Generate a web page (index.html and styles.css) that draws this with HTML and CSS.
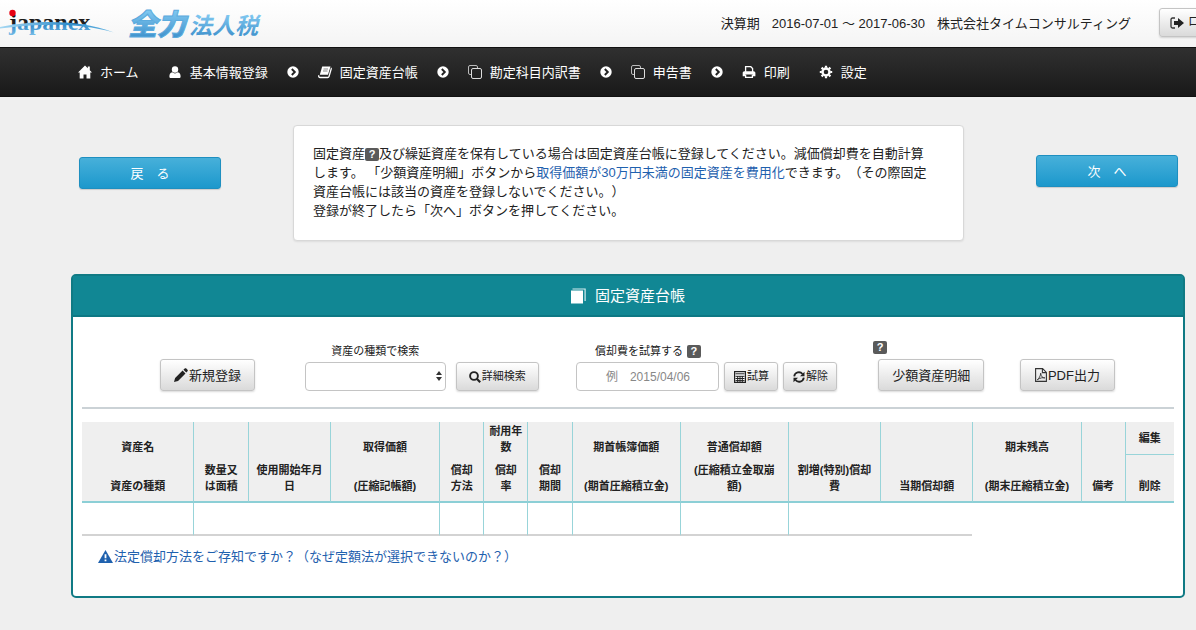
FILE: index.html
```html
<!DOCTYPE html>
<html lang="ja">
<head>
<meta charset="utf-8">
<meta name="viewport" content="width=device-width, initial-scale=1">
<title>固定資産台帳 - 全力法人税</title>
<link rel="stylesheet" href="styles.css">
</head>
<body>
<svg class="defs" aria-hidden="true">
  <symbol id="i-next" viewBox="0 0 12 12"><circle cx="6" cy="6" r="5.7" fill="#fff"/><path d="M4.8 3l3 3-3 3" fill="none" stroke="#222" stroke-width="1.9"/></symbol>
  <symbol id="i-copy" viewBox="0 0 14 14"><path d="M3.5 9.5H2A1.5 1.5 0 0 1 .5 8V2A1.5 1.5 0 0 1 2 .5h6A1.5 1.5 0 0 1 9.500 2v1.500" fill="none" stroke="#bbb"/><rect x="3.500" y="3.500" width="10" height="10" rx="1.500" fill="none" stroke="#ddd"/></symbol>
</svg>

<header class="top">
  <a class="brand" href="#" aria-label="全力法人税">
    <svg width="262" height="47" viewBox="0 0 262 47">
      <defs>
        <linearGradient id="ink" gradientUnits="userSpaceOnUse" x1="0" y1="14" x2="0" y2="36">
          <stop offset="0" stop-color="#111"/><stop offset=".45" stop-color="#222"/><stop offset=".47" stop-color="#2f86c4"/><stop offset="1" stop-color="#7cc0ea"/>
        </linearGradient>
        <linearGradient id="sky" x1="0" y1="0" x2="0" y2="1">
          <stop offset=".2" stop-color="#83caf2"/><stop offset=".9" stop-color="#3d90cb"/>
        </linearGradient>
        <linearGradient id="arc" x1="0" y1="0" x2="1" y2="0">
          <stop offset="0" stop-color="#a5d8f3"/><stop offset=".6" stop-color="#2e8ccb"/><stop offset="1" stop-color="#6db9e4"/>
        </linearGradient>
      </defs>
      <text x="9" y="30" class="logo-en" fill="url(#ink)">japanex</text>
      <path d="M0 27C30 21 75 18 114 32.500C78 22.500 40 23.500 0 28.500Z" fill="url(#arc)"/>
      <circle cx="12.500" cy="13" r="3.200" fill="#e60012"/>
      <text x="128" y="35" class="logo-lead" fill="url(#sky)" stroke="#5cabdd">全力</text>
      <text x="189" y="34" class="logo-sub" fill="url(#sky)">法人税</text>
    </svg>
  </a>
  <p class="period"><span>決算期</span><span>2016-07-01 ～ 2017-06-30</span><span>株式会社タイムコンサルティング</span></p>
  <button type="button" class="btn btn-logout">
    <svg width="14" height="12" viewBox="0 0 14 12"><path d="M5 1H2.500A1.500 1.500 0 0 0 1 2.500v7A1.500 1.500 0 0 0 2.500 11H5" fill="none" stroke="#333" stroke-width="1.300"/><path d="M4 4h4V1l6 5-6 5V8H4z" fill="#222"/></svg>
    ログアウト
  </button>
</header>

<nav class="nav">
  <a class="nav-item wide" href="#">
    <svg width="14" height="14" viewBox="0 0 14 14"><path d="M7 .5L9.800 3.200V1.500h2v3.700L14 7.400h-1.700V13.500H8.500V9.500h-3v4H1.700V7.400H0z" fill="#fff"/></svg>ホーム</a>
  <a class="nav-item" href="#">
    <svg width="14" height="14" viewBox="0 0 14 14"><circle cx="7" cy="4.500" r="3.200" fill="#fff"/><path d="M4.300 7.300c1.500 1.500 3.900 1.500 5.400 0C12 7.500 12.600 9.500 12.600 11.500c0 1-.6 1.500-1.500 1.500H2.900c-.9 0-1.500-.5-1.500-1.500 0-2 .6-4 2.900-4.200z" fill="#fff"/></svg>基本情報登録</a>
  <svg class="next" width="12" height="12"><use href="#i-next"/></svg>
  <a class="nav-item" href="#">
    <svg width="14" height="14" viewBox="0 0 14 14"><path d="M4.200 1.500h8.300L10 9.800H1.800z" fill="#fff"/><path d="M13 3c.3.400.3.700.1 1.200L11 11.500c-.2.700-.6 1-1.300 1H2.200c-1.200 0-1.800-1-1.300-2.200" fill="none" stroke="#fff" stroke-width="1.300"/><path d="M5.500 4h4.500M5 6h4.500" stroke="#555" stroke-width=".7"/></svg>固定資産台帳</a>
  <svg class="next" width="12" height="12"><use href="#i-next"/></svg>
  <a class="nav-item" href="#"><svg width="14" height="14"><use href="#i-copy"/></svg>勘定科目内訳書</a>
  <svg class="next" width="12" height="12"><use href="#i-next"/></svg>
  <a class="nav-item" href="#"><svg width="14" height="14"><use href="#i-copy"/></svg>申告書</a>
  <svg class="next" width="12" height="12"><use href="#i-next"/></svg>
  <a class="nav-item wide" href="#">
    <svg width="14" height="14" viewBox="0 0 14 14"><path d="M3.600 7V1.700h5.200l1.800 1.800V7" fill="none" stroke="#fff" stroke-width="1.300"/><path d="M2.500 6.200h9C12.600 6.200 13.400 7 13.400 8v3.300H11V9.500H3v1.800H.7V8c0-1 .7-1.800 1.800-1.800z" fill="#fff"/><path d="M3.600 9.500v2.800h6.800V9.500" fill="none" stroke="#fff" stroke-width="1.300"/></svg>印刷</a>
  <a class="nav-item" href="#">
    <svg width="14" height="14" viewBox="0 0 14 14"><circle cx="7" cy="7" r="3.500" fill="none" stroke="#fff" stroke-width="2.400"/><path d="M7 .8v2M7 11.200v2M.8 7h2M11.200 7h2M2.600 2.600L4 4M10 10l1.400 1.400M2.600 11.400L4 10M10 4l1.400-1.400" stroke="#fff" stroke-width="2.200"/></svg>設定</a>
</nav>

<main>
  <section class="guide">
    <button type="button" class="btn-primary back">戻　る</button>
    <div class="guide-box">
      <p>固定資産<button type="button" class="help inline" aria-label="ヘルプ">?</button>及び繰延資産を保有している場合は固定資産台帳に登録してください。減価償却費を自動計算します。 「少額資産明細」ボタンから<a href="#">取得価額が30万円未満の固定資産を費用化</a>できます。（その際固定資産台帳には該当の資産を登録しないでください。）</p>
      <p>登録が終了したら「次へ」ボタンを押してください。</p>
    </div>
    <button type="button" class="btn-primary forward">次　へ</button>
  </section>

  <section class="panel">
    <h1 class="panel-title">
      <svg width="15" height="16" viewBox="0 0 15 16"><rect x="0" y="2.500" width="12" height="13" fill="#fff"/><path d="M1.500 1h12.600v12" fill="none" stroke="#d5eef0" stroke-width="1.200"/></svg>
      固定資産台帳</h1>
    <div class="panel-body">
      <div class="toolbar">
        <button type="button" class="btn btn-large btn-new">
          <svg width="14" height="14" viewBox="0 0 14 14"><path d="M0 14l1.100-4L8.600 2.500l2.900 2.900L4 12.900zM9.400 1.700L10.700.5c.5-.5 1.100-.5 1.600 0l1.200 1.200c.5.500.5 1.100 0 1.600l-1.200 1.300z" fill="#222"/></svg>新規登録</button>

        <div class="group">
          <div class="field">
            <label for="kind">資産の種類で検索</label>
            <div class="select">
              <select id="kind"><option></option></select>
              <svg width="6" height="10" viewBox="0 0 6 10"><path d="M3 0l3 4H0zM3 10l3-4H0z" fill="#333"/></svg>
            </div>
          </div>
          <button type="button" class="btn btn-search">
            <svg width="12" height="12" viewBox="0 0 12 12"><circle cx="5" cy="5" r="3.900" fill="none" stroke="#222" stroke-width="1.900"/><path d="M7.800 7.800l3.400 3.400" stroke="#222" stroke-width="2.200"/></svg>詳細検索</button>
        </div>

        <div class="group tight">
          <div class="field">
            <div class="caption"><label for="trial">償却費を試算する</label><button type="button" class="help" aria-label="ヘルプ">?</button></div>
            <input id="trial" type="text" placeholder="例　2015/04/06">
          </div>
          <button type="button" class="btn btn-small">
            <svg width="12" height="12" viewBox="0 0 12 12"><path d="M.6.600h10.800v10.800H.6z" fill="#fff" stroke="#222" stroke-width="1.200"/><path d="M1.500 2.800h9M1.500 5.300h9M1.500 7.500h9M1.500 9.600h9M3.700 5v6M6 5v6M8.300 5v6" stroke="#222"/></svg>試算</button>
          <button type="button" class="btn btn-small">
            <svg width="12" height="12" viewBox="0 0 12 12"><path d="M1.200 5.300A4.700 4.700 0 0 1 9.500 3M10.800 6.700A4.700 4.700 0 0 1 2.500 9" fill="none" stroke="#222" stroke-width="1.800"/><path d="M11.500.8v4.500H7zM.5 11.200V6.700H5z" fill="#222"/></svg>解除</button>
        </div>

        <div class="small-asset">
          <button type="button" class="help" aria-label="ヘルプ">?</button>
          <button type="button" class="btn btn-large">少額資産明細</button>
        </div>

        <button type="button" class="btn btn-large btn-pdf">
          <svg width="12" height="14" viewBox="0 0 12 14"><path d="M.6.600h7l3.800 3.800v9H.6zM7.400.600v4h4" fill="none" stroke="#333" stroke-width="1.100"/><path d="M2.300 11.700c1.800-1 3.200-4 3.400-6.500.2 3 1.800 5 4.200 4.700-2-.6-4.800 0-7.600 1.800z" fill="none" stroke="#333" stroke-width=".9"/></svg>PDF出力</button>
      </div>

      <table class="ledger">
        <colgroup>
          <col class="c-name"><col class="c-qty"><col class="c-date"><col class="c-cost"><col class="c-narrow"><col class="c-narrow"><col class="c-narrow"><col class="c-amount"><col class="c-amount"><col class="c-mid"><col class="c-mid"><col class="c-amount"><col class="c-narrow"><col class="c-edit">
        </colgroup>
        <thead>
          <tr>
            <th>資産名</th>
            <th rowspan="2" class="low">数量又は面積</th>
            <th rowspan="2" class="low tight-x">使用開始年月日</th>
            <th>取得価額</th>
            <th rowspan="2" class="low">償却方法</th>
            <th class="tight-x">耐用年数</th>
            <th rowspan="2" class="low">償却期間</th>
            <th>期首帳簿価額</th>
            <th>普通償却額</th>
            <th rowspan="2" class="low tight-x">割増(特別)償却費</th>
            <th rowspan="2" class="low">当期償却額</th>
            <th>期末残高</th>
            <th rowspan="2" class="low">備考</th>
            <th class="edit">編集</th>
          </tr>
          <tr class="second">
            <th>資産の種類</th>
            <th>(圧縮記帳額)</th>
            <th>償却率</th>
            <th>(期首圧縮積立金)</th>
            <th>(圧縮積立金取崩額)</th>
            <th>(期末圧縮積立金)</th>
            <th>削除</th>
          </tr>
        </thead>
        <tbody>
          <tr><td></td><td colspan="3"></td><td></td><td></td><td></td><td></td><td></td><td colspan="2"></td></tr>
        </tbody>
      </table>

      <a class="notice" href="#">
        <svg width="15" height="13" viewBox="0 0 15 13"><path d="M7.500 0L15 13H0z" fill="#1f61ae"/><path d="M7.500 4.200v4M7.500 9.500v1.800" stroke="#fff" stroke-width="1.800"/></svg>法定償却方法をご存知ですか？（なぜ定額法が選択できないのか？）</a>
    </div>
  </section>
</main>
</body>
</html>
```
FILE: styles.css
```css
* { box-sizing: border-box; }

body {
  margin: 0;
  background: #efefef;
  color: #222;
  font: 13px/19px "Liberation Sans", "Noto Sans CJK JP", sans-serif;
  text-spacing-trim: space-all;
  overflow-x: hidden;
}

p { margin: 0; }
a { color: #1f61ae; text-decoration: none; }
button, input, select { font: inherit; color: inherit; margin: 0; }
svg { flex: none; display: block; }
.defs { position: absolute; width: 0; height: 0; }

/* header */
.top {
  display: flex;
  align-items: center;
  height: 47px;
  overflow: hidden;
  background: linear-gradient(#fff, #f4f4f4);
}
.brand { margin-right: auto; }
.logo-en { font: bold 24px "Liberation Serif", serif; }
.logo-lead { font: italic 900 29px "Noto Sans CJK JP", sans-serif; }
.logo-sub { font: italic bold 23px "Noto Sans CJK JP", sans-serif; }
.period { display: flex; gap: 12px; margin-right: 28px; white-space: nowrap; }

.btn {
  display: inline-flex;
  align-items: center;
  justify-content: center;
  gap: 1px;
  height: 29px;
  padding: 0 10px;
  border: 1px solid #c4c4c4;
  border-radius: 3px;
  background: linear-gradient(#fff, #dadada);
  box-shadow: 0 1px 2px rgba(0, 0, 0, .15);
  font-size: 11px;
  white-space: nowrap;
}
.btn-logout {
  flex: none;
  gap: 4px;
  justify-content: flex-start;
  width: 102px;
  margin: 0 -65px 2px 0;
  font-size: 12px;
}
.btn-large { height: 32px; padding: 0 13px; font-size: 13px; }

/* navigation */
.nav {
  display: flex;
  align-items: center;
  gap: 19px;
  height: 50px;
  padding-left: 78px;
  border-top: 1px solid #111;
  border-bottom: 1px solid #111;
  background: linear-gradient(#303030, #191919);
}
.nav-item { display: flex; align-items: center; gap: 8px; color: #fff; white-space: nowrap; }
.nav-item.wide { margin-right: 10px; }

/* guidance */
.guide {
  display: grid;
  grid-template-columns: 142px 1fr 142px;
  gap: 72px;
  align-items: start;
  padding: 28px 18px 0 79px;
}
.guide-box {
  padding: 18px 30px 20px 19px;
  border: 1px solid #d8d8d8;
  border-radius: 4px;
  background: #fff;
  box-shadow: 0 1px 2px rgba(0, 0, 0, .08);
}
.btn-primary {
  height: 32px;
  border: 1px solid #1e8fc0;
  border-radius: 3px;
  background: linear-gradient(#47b0da, #1c98cc);
  box-shadow: 0 1px 1px rgba(0, 0, 0, .15);
  color: #fff;
}
.back { margin-top: 32px; }
.forward { margin-top: 30px; }

.help {
  width: 14px;
  height: 13px;
  padding: 0;
  border: 0;
  border-radius: 2px;
  background: #5a5a5a;
  color: #fff;
  font-size: 11px;
  font-weight: bold;
  line-height: 13px;
}
.help.inline { vertical-align: middle; }

/* panel */
.panel {
  margin: 33px 11px 33px 71px;
  border: 2px solid #107a84;
  border-radius: 5px;
  background: #fff;
}
.panel-title {
  display: flex;
  align-items: center;
  justify-content: center;
  gap: 9px;
  height: 41px;
  margin: 0;
  border-bottom: 2px solid #0d7884;
  background: #118794;
  color: #fff;
  font-size: 15px;
  font-weight: normal;
}
.panel-body { padding: 0 9px; }

.toolbar {
  display: flex;
  align-items: flex-end;
  justify-content: space-between;
  height: 92px;
  padding: 0 59px 16px 78px;
  border-bottom: 2px solid #cbd2d6;
}
.btn-new { width: 95px; margin-right: 14px; }
.btn-pdf { width: 95px; }
.btn-search { width: 83px; }
.btn-small { width: 54px; padding: 0; }
.group { display: flex; align-items: flex-end; gap: 10px; }
.group.tight { gap: 5px; margin-left: 2px; }
.field { display: flex; flex-direction: column; align-items: center; font-size: 11px; line-height: 22px; }
.caption { display: flex; align-items: center; gap: 4px; }
.select { position: relative; width: 141px; }
.select select { width: 100%; appearance: none; }
.select svg { position: absolute; right: 4px; top: 9px; pointer-events: none; }
.field select, .field input {
  display: block;
  height: 29px;
  border: 1px solid #c4c4c4;
  border-radius: 4px;
  background: #fff;
}
.field input { width: 143px; font-size: 12px; text-align: center; }
.field input::placeholder { color: #888; }
.small-asset { display: flex; flex-direction: column; align-items: flex-start; gap: 5px; }
.small-asset .btn { margin-left: 5px; }

/* ledger */
.ledger {
  width: 100%;
  margin-top: 13px;
  border-collapse: separate;
  border-spacing: 0;
  table-layout: fixed;
  font-size: 11px;
  line-height: 16px;
}
.c-name { width: 10.2%; }
.c-qty { width: 5%; }
.c-date { width: 7.5%; }
.c-cost { width: 10%; }
.c-narrow { width: 4.05%; }
.c-amount { width: 9.9%; }
.c-mid { width: 8.45%; }
.c-edit { width: 4.5%; }
.ledger th {
  padding: 0 8px;
  border-left: 1px solid #98d4d9;
  background: #efefef;
  vertical-align: bottom;
}
.ledger th:first-child, .ledger td:first-child { border-left: 0; }
.ledger .second th:first-child { border-left: 0; }
.ledger .tight-x { padding-left: 4px; padding-right: 4px; }
.ledger .edit { padding: 8px; border-bottom: 1px solid #98d4d9; }
.ledger .low, .ledger .second th { padding-top: 7px; padding-bottom: 7px; border-bottom: 2px solid #8ccfd6; }
.ledger td { height: 33px; padding: 0; border-left: 1px solid #98d4d9; border-bottom: 2px solid #d3d3d3; }

.notice { display: flex; align-items: center; gap: 1px; padding: 11px 16px 30px; }
```
